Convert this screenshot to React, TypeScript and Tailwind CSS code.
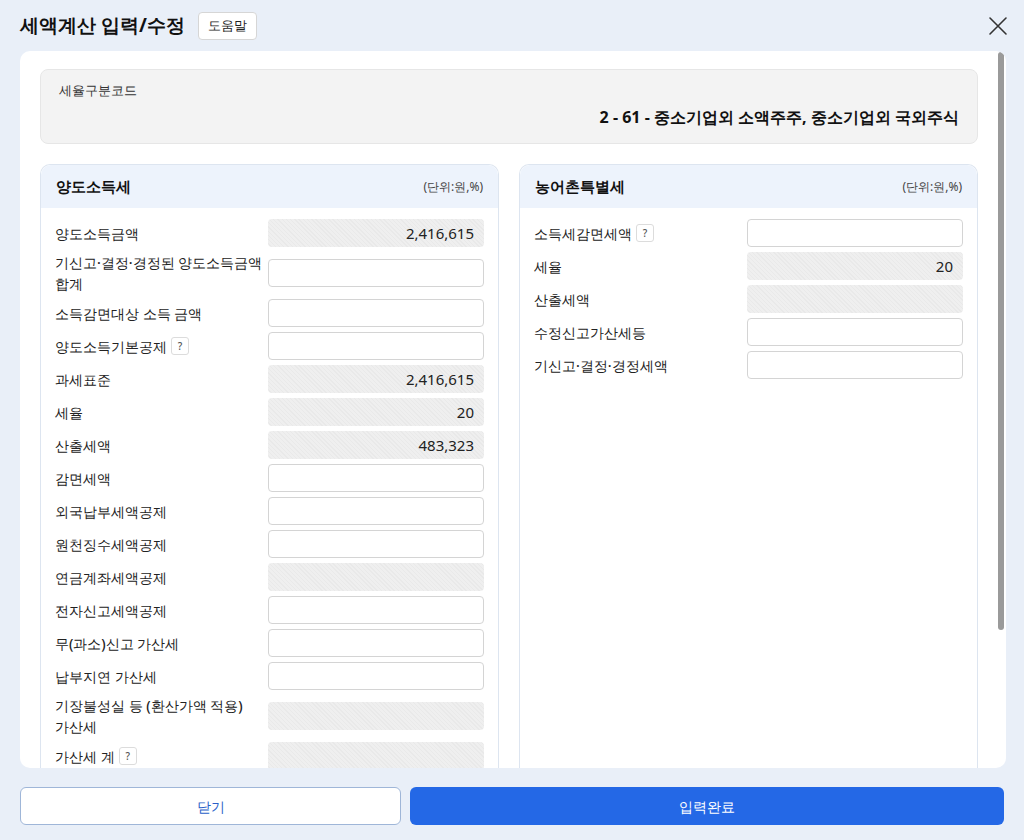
import React from "react";

type Row = { label: string[]; value?: string; disabled?: boolean; help?: boolean };

const left: Row[] = [
  { label: ["양도소득금액"], value: "2,416,615", disabled: true },
  { label: ["기신고·결정·경정된 양도소득금액", "합계"] },
  { label: ["소득감면대상 소득 금액"] },
  { label: ["양도소득기본공제"], help: true },
  { label: ["과세표준"], value: "2,416,615", disabled: true },
  { label: ["세율"], value: "20", disabled: true },
  { label: ["산출세액"], value: "483,323", disabled: true },
  { label: ["감면세액"] },
  { label: ["외국납부세액공제"] },
  { label: ["원천징수세액공제"] },
  { label: ["연금계좌세액공제"], disabled: true },
  { label: ["전자신고세액공제"] },
  { label: ["무(과소)신고 가산세"] },
  { label: ["납부지연 가산세"] },
  { label: ["기장불성실 등 (환산가액 적용)", "가산세"], disabled: true },
  { label: ["가산세 계"], help: true, disabled: true },
];
const right: Row[] = [
  { label: ["소득세감면세액"], help: true },
  { label: ["세율"], value: "20", disabled: true },
  { label: ["산출세액"], disabled: true },
  { label: ["수정신고가산세등"] },
  { label: ["기신고·결정·경정세액"] },
];

function Help() {
  return (
    <span className="ml-1 inline-flex h-[18px] w-[18px] items-center justify-center rounded-[3px] border border-[#dcdcdc] bg-white text-[10px] text-[#555]">?</span>
  );
}

function Field({ r }: { r: Row }) {
  const two = r.label.length > 1;
  return (
    <div className={`flex items-center justify-between ${two ? "min-h-[38px]" : "min-h-[28px]"}`}>
      <div className="text-[14px] leading-[21px] text-[#222] font-medium">
        {r.label.map((l, i) => (
          <div key={i} className="flex items-center">
            {l}
            {r.help && i === 0 && <Help />}
          </div>
        ))}
      </div>
      <div
        className={`flex h-[28px] w-[216px] shrink-0 items-center justify-end rounded-[4px] px-[10px] text-[15px] text-[#222] font-normal ${
          r.disabled
            ? "bg-[repeating-linear-gradient(45deg,#efefef_0px,#efefef_2px,#e9e9e9_2px,#e9e9e9_3px)]"
            : "border border-[#d4d4d4] bg-white"
        }`}
      >
        {r.value}
      </div>
    </div>
  );
}

function Card({ title, rows }: { title: string; rows: Row[] }) {
  return (
    <div className="flex-1 rounded-t-[10px] border border-b-0 border-[#dde5f0] bg-white">
      <div className="flex h-[43px] items-center justify-between rounded-t-[10px] bg-[#edf3fc] px-[15px]">
        <span className="text-[15px] font-bold text-[#111]">{title}</span>
        <span className="text-[12px] text-[#444]">(단위:원,%)</span>
      </div>
      <div className="flex flex-col gap-[5px] px-[14px] pt-[11px]">
        {rows.map((r, i) => (
          <Field key={i} r={r} />
        ))}
      </div>
    </div>
  );
}

export default function App() {
  return (
    <div className="flex h-[840px] w-[1024px] flex-col bg-[#e9eff8] font-['Noto_Sans_CJK_KR','Noto_Sans',sans-serif]">
      <div className="flex h-[51px] items-center justify-between pl-[20px] pr-[16px]">
        <div className="flex items-center gap-[13px]">
          <span className="text-[19px] font-bold text-[#111]">세액계산 입력/수정</span>
          <span className="flex h-[28px] items-center rounded-[4px] border border-[#d6d6d6] bg-white px-[9px] text-[13px] text-[#222]">도움말</span>
        </div>
        <svg width="20" height="20" viewBox="0 0 20 20" stroke="#333" strokeWidth="1.6" strokeLinecap="round">
          <path d="M2 2L18 18M18 2L2 18" />
        </svg>
      </div>
      <div className="relative ml-[20px] mr-[18px] h-[717px] overflow-hidden rounded-[10px] bg-white">
        <div className="pl-[20px] pr-[28px] pt-[18px]">
          <div className="h-[75px] rounded-[8px] border border-[#e6e6e6] bg-[#f3f3f3] px-[18px] pt-[11px]">
            <div className="text-[13px] text-[#333]">세율구분코드</div>
            <div className="mt-[4px] text-right text-[16px] font-bold text-[#111]">2 - 61 - 중소기업외 소액주주, 중소기업외 국외주식</div>
          </div>
          <div className="mt-[20px] flex gap-[20px]">
            <Card title="양도소득세" rows={left} />
            <Card title="농어촌특별세" rows={right} />
          </div>
        </div>
        <div className="absolute right-[2px] top-[1px] h-[578px] w-[6px] rounded-full bg-[#9a9a9a]" />
      </div>
      <div className="mt-[19px] flex gap-[9px] px-[20px]">
        <button className="h-[38px] w-[381px] rounded-[6px] border border-[#9fb6d8] bg-white text-[14px] font-medium text-[#2a5fc9]">닫기</button>
        <button className="h-[38px] flex-1 rounded-[6px] bg-[#2468e6] text-[14px] font-medium text-white">입력완료</button>
      </div>
    </div>
  );
}
